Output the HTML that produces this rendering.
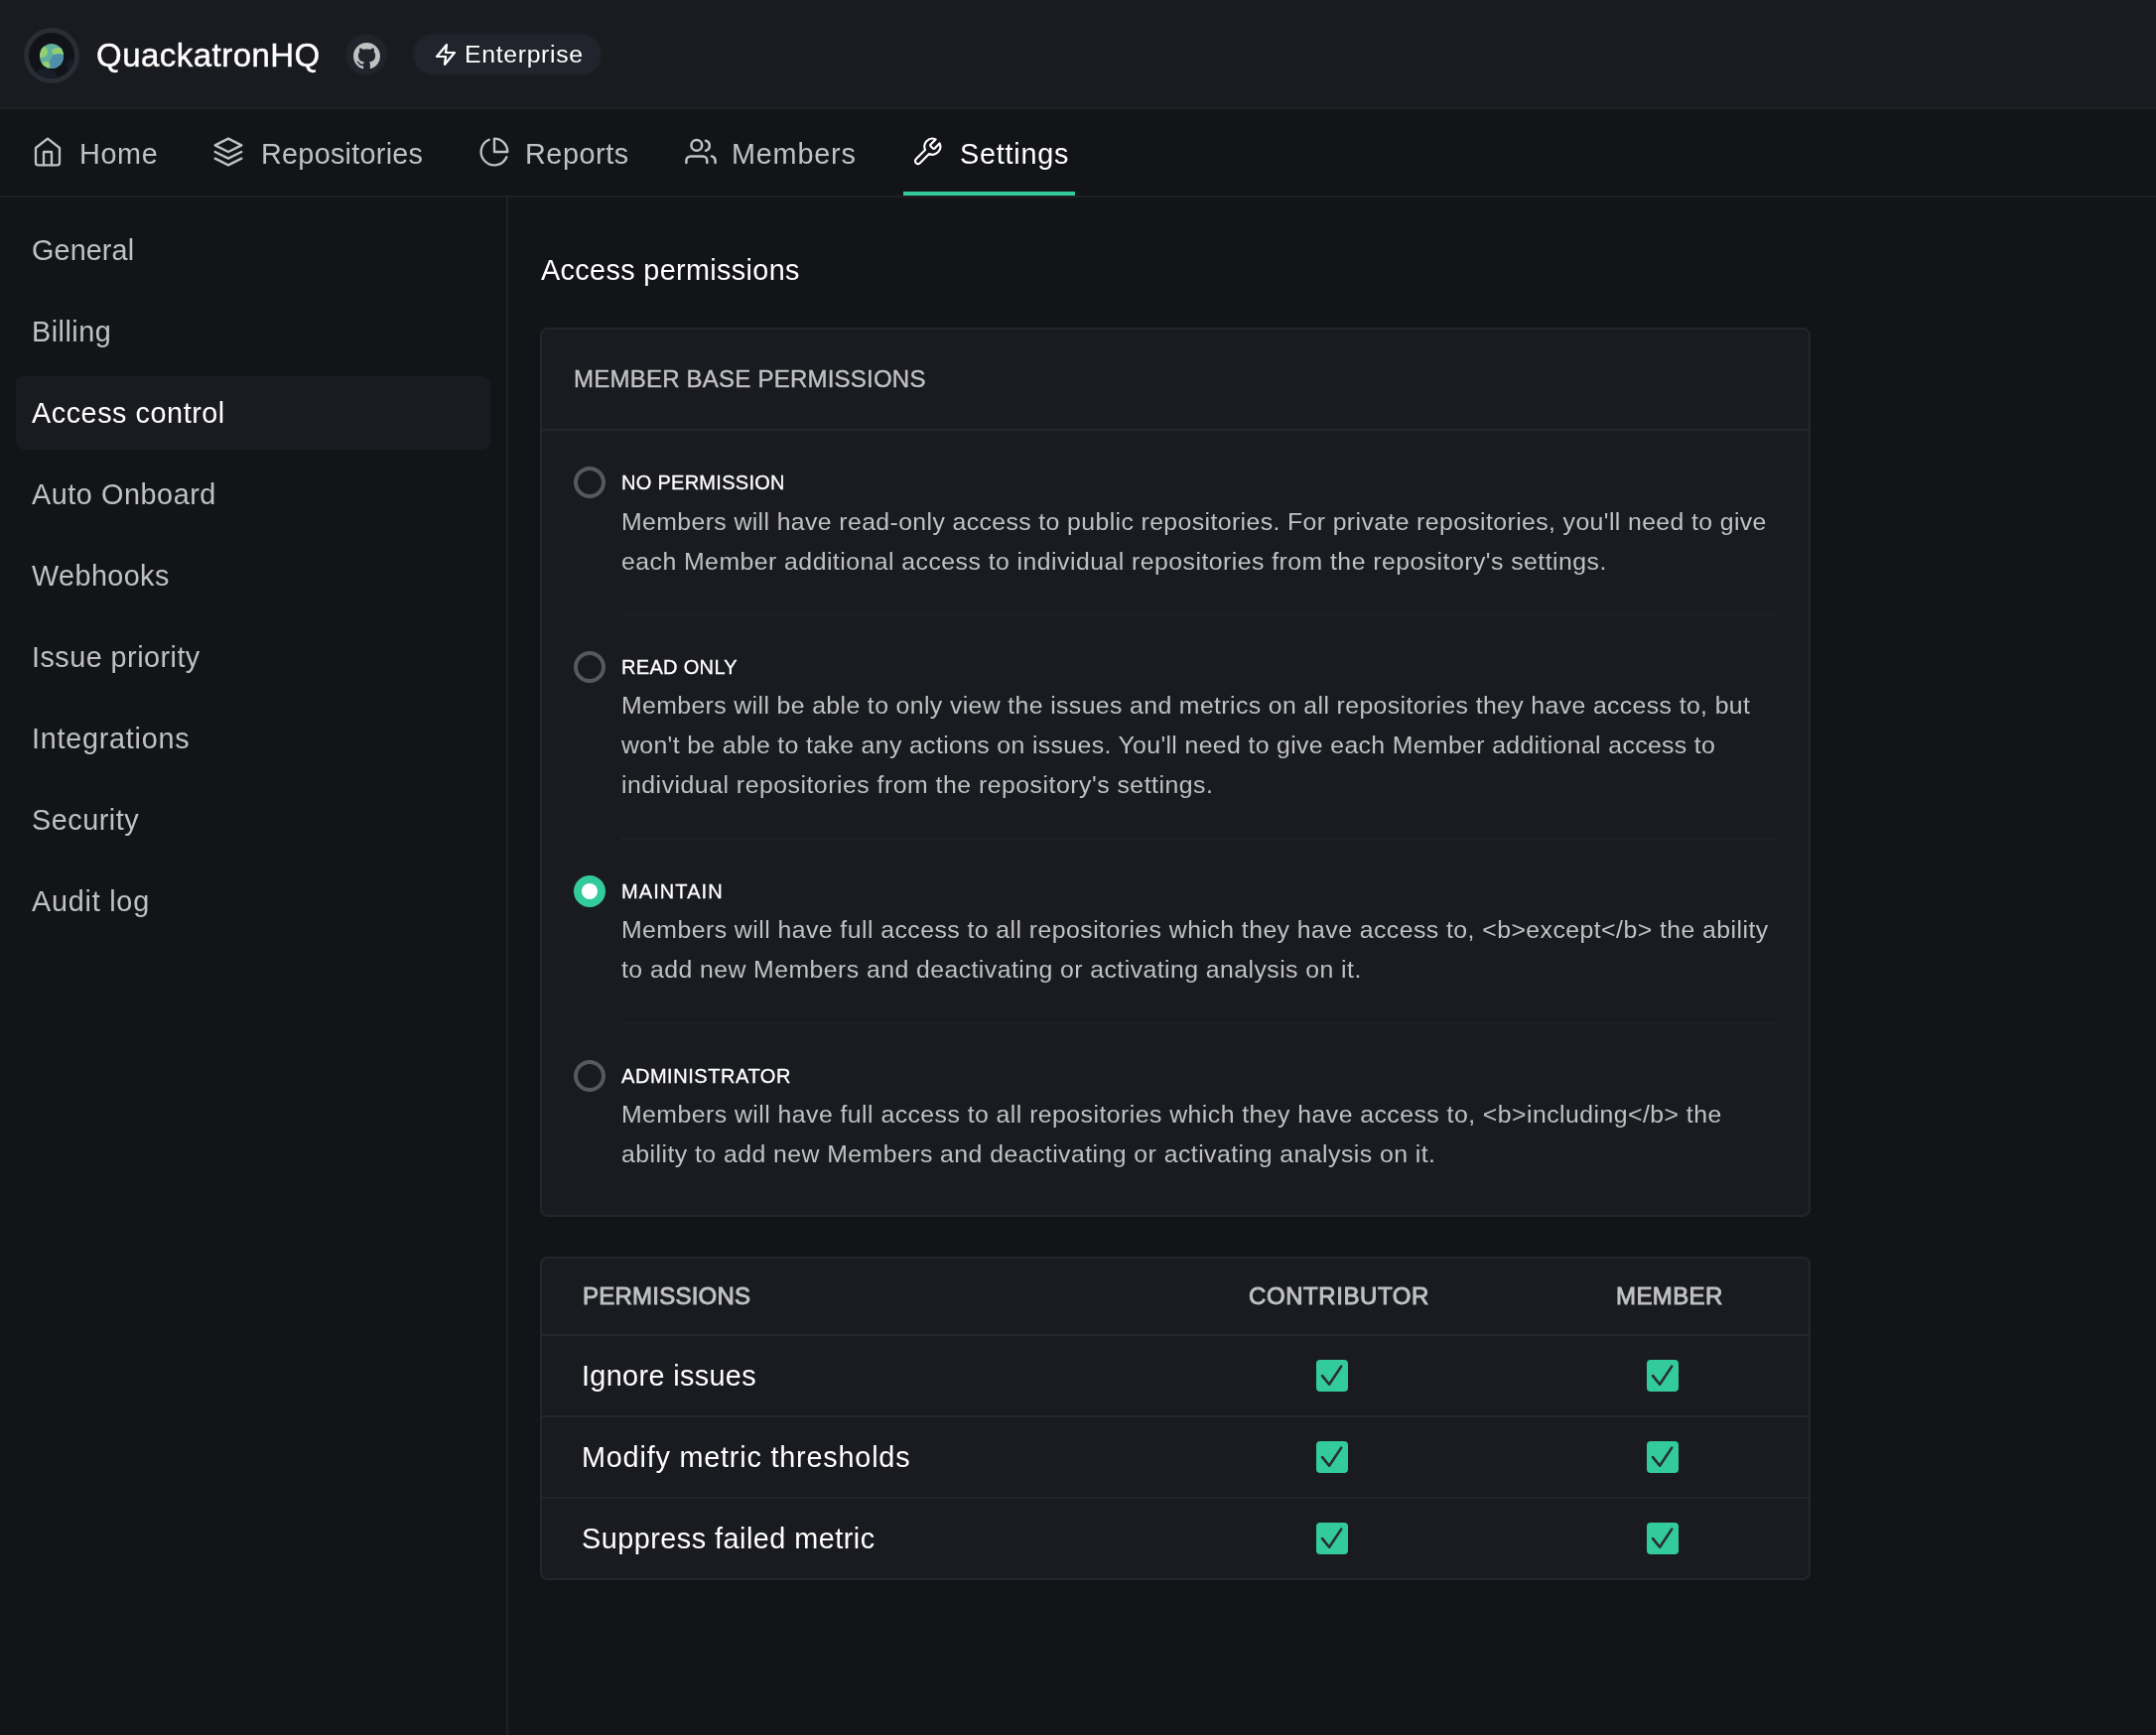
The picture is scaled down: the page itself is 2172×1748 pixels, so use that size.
<!DOCTYPE html>
<html>
<head>
<meta charset="utf-8">
<style>
html,body{margin:0;padding:0;background:#131418;overflow:hidden;}
body{width:1086px;height:874px;position:relative;font-family:"Liberation Sans",sans-serif;-webkit-font-smoothing:antialiased;}
@media (min-width:1600px){ body{zoom:2;} }
.a{position:absolute;white-space:nowrap;will-change:transform;}
#hdr{position:absolute;left:0;top:0;width:1086px;height:54px;background:#1a1b20;border-bottom:1px solid #1e2124;}
#nav{position:absolute;left:0;top:55px;width:1086px;height:43.5px;background:#131418;border-bottom:1px solid #1e2124;}
#side{position:absolute;left:0;top:99.5px;width:255px;height:780px;border-right:1px solid #1e2124;}
.ic{position:absolute;fill:none;stroke-linecap:round;stroke-linejoin:round;}
.nt{font-size:14.4px;color:#c0c1c3;line-height:20px;}
.si{font-size:14.4px;color:#c0c1c3;line-height:20px;left:16px;}
.card{position:absolute;left:272px;width:638px;background:#1a1b20;border:1px solid #23262e;border-radius:4px;}
.rad{position:absolute;left:289px;width:12px;height:12px;border:2px solid #555a5f;border-radius:50%;}
.ot{font-size:10px;color:#fff;-webkit-text-stroke:0.15px #fff;letter-spacing:.6px;line-height:16px;left:313px;}
.od{font-size:12.4px;color:#c0c1c3;line-height:20px;left:313px;}
.sep{position:absolute;left:313px;width:582px;height:1px;background:#1e2124;}
.th{font-size:12px;color:#c0c1c3;-webkit-text-stroke:0.45px #c0c1c3;letter-spacing:.5px;line-height:16px;}
.rl{font-size:14.4px;color:#fff;line-height:20px;left:293px;}
.rdiv{position:absolute;left:273px;width:638px;height:1px;background:#23262e;}
.cb{position:absolute;width:16px;height:16px;background:#33cb9a;border-radius:2px;}
.cb svg{position:absolute;left:0;top:0;}
</style>
</head>
<body>
<div id="hdr"></div>
<!-- avatar -->
<div class="a" style="left:12px;top:13.9px;width:23px;height:23px;border:2.5px solid #2a2d36;border-radius:50%;background:#111318;overflow:hidden;">
  <div style="position:absolute;left:3px;top:18px;width:11px;height:7px;border-radius:50%;background:#181d2a;"></div><div style="position:absolute;left:19px;top:13px;width:5px;height:7px;border-radius:50%;background:#171b27;"></div><div style="position:absolute;left:5.25px;top:5.4px;width:12.4px;height:12.4px;border-radius:50%;background:#5fae9e;overflow:hidden;">
    <div style="position:absolute;left:-2px;top:1px;width:6px;height:6px;border-radius:50%;background:#93cf72;"></div>
    <div style="position:absolute;left:6px;top:2px;width:7px;height:4px;border-radius:50%;background:#93cf72;"></div>
    <div style="position:absolute;left:5px;top:5px;width:9px;height:9px;border-radius:50%;background:#4f8ea8;"></div>
    <div style="position:absolute;left:1px;top:9px;width:4px;height:4px;border-radius:50%;background:#93cf72;"></div>
  </div>
</div>
<div class="a" id="t_org" style="left:48.40px;top:17.90px;font-size:16.5px;line-height:20px;color:#fff;letter-spacing:0.236px;-webkit-text-stroke:0.2px #fff;">QuackatronHQ</div>
<!-- github -->
<div class="a" style="left:173.4px;top:16.7px;width:20px;height:20px;border:1px solid #1c1f23;border-radius:50%;background:#21242c;"></div>
<svg class="a" style="left:177.75px;top:21.45px" width="13.5" height="13.5" viewBox="0 0 16 16"><path fill="#c0c1c3" d="M8 0C3.58 0 0 3.58 0 8c0 3.54 2.290 6.530 5.470 7.590.4.07.55-.17.55-.38 0-.19-.01-.82-.01-1.49-2.01.37-2.53-.49-2.69-.94-.09-.23-.48-.94-.82-1.13-.28-.15-.68-.52-.01-.53.63-.01 1.08.58 1.23.82.72 1.21 1.87.87 2.33.66.07-.52.28-.87.51-1.07-1.78-.2-3.64-.89-3.64-3.950 0-.87.31-1.59.82-2.15-.08-.2-.36-1.020.08-2.12 0 0 .67-.21 2.2.82.64-.18 1.32-.27 2-.27.68 0 1.36.09 2 .27 1.53-1.04 2.2-.82 2.2-.82.44 1.1.16 1.92.08 2.12.51.56.82 1.27.82 2.15 0 3.07-1.87 3.75-3.65 3.95.29.25.54.73.54 1.48 0 1.07-.01 1.93-.01 2.2 0 .21.15.46.55.38A8.013 8.013 0 0016 8c0-4.42-3.58-8-8-8z"/></svg>
<!-- enterprise -->
<div class="a" style="left:207.5px;top:16.6px;width:94px;height:19.8px;border:1px solid #1c1f23;border-radius:11px;background:#21242c;"></div>
<svg class="a ic" style="left:218.5px;top:21.5px" width="12" height="12" viewBox="0 0 24 24" stroke="#fff" stroke-width="2.2"><polygon points="13 2 3 14 12 14 11 22 21 10 12 10 13 2"/></svg>
<div class="a" id="t_ent" style="left:233.85px;top:19.45px;font-size:12.4px;line-height:16px;color:#fff;letter-spacing:0.337px;">Enterprise</div>

<div id="nav"></div>
<!-- nav icons -->
<svg class="ic" style="left:16px;top:68.6px" width="16" height="16" viewBox="0 0 24 24" stroke="#c0c1c3" stroke-width="1.75"><path d="m3 9 9-7 9 7v11a2 2 0 0 1-2 2H5a2 2 0 0 1-2-2z"/><polyline points="9 22 9 12 15 12 15 22"/></svg>
<div class="a nt" id="t_home" style="left:40.00px;top:67.55px;letter-spacing:0.316px;">Home</div>
<svg class="ic" style="left:107px;top:68.3px" width="16" height="16" viewBox="0 0 24 24" stroke="#c0c1c3" stroke-width="1.75"><polygon points="12 2 2 7 12 12 22 7 12 2"/><polyline points="2 17 12 22 22 17"/><polyline points="2 12 12 17 22 12"/></svg>
<div class="a nt" id="t_repo" style="left:131.25px;top:67.30px;letter-spacing:0.134px;">Repositories</div>
<svg class="ic" style="left:240.8px;top:68.4px" width="16" height="16" viewBox="0 0 24 24" stroke="#c0c1c3" stroke-width="1.75"><path d="M21.21 15.89A10 10 0 1 1 8 2.83"/><path d="M22 12A10 10 0 0 0 12 2v10z"/></svg>
<div class="a nt" id="t_rep" style="left:264.70px;top:67.30px;letter-spacing:0.271px;">Reports</div>
<svg class="ic" style="left:344px;top:68px" width="20" height="18" viewBox="0 0 20 18" stroke="#c0c1c3" stroke-width="1.25"><path d="M1.7 14.0V12.9A2.2 2.2 0 0 1 3.9 10.7H9.95A2.2 2.2 0 0 1 12.15 12.9V14.0"/><circle cx="6.9" cy="5.2" r="2.675"/><path d="M11.5 2.9A2.6 2.6 0 0 1 11.5 7.9"/><path d="M14.45 10.7A2.4 2.4 0 0 1 16.3 13.0V14.0"/></svg>
<div class="a nt" id="t_mem" style="left:368.60px;top:67.30px;letter-spacing:0.402px;">Members</div>
<svg class="ic" style="left:458.8px;top:68.6px" width="16" height="16" viewBox="0 0 24 24" stroke="#fff" stroke-width="1.6"><path d="M14.7 6.3a1 1 0 0 0 0 1.4l1.6 1.6a1 1 0 0 0 1.4 0l3.77-3.77a6 6 0 0 1-7.94 7.94l-6.91 6.91a2.12 2.12 0 0 1-3-3l6.91-6.91a6 6 0 0 1 7.94-7.94l-3.760 3.76z"/></svg>
<div class="a nt" id="t_set" style="left:483.40px;top:67.30px;color:#fff;letter-spacing:0.378px;">Settings</div>
<div class="a" style="left:455px;top:96.5px;width:86.6px;height:2px;background:#33cb9a;"></div>

<div id="side"></div>
<div class="a" style="left:8px;top:189.4px;width:239px;height:37px;border-radius:4px;background:#1a1b20;"></div>
<div class="a si" id="s0" style="top:115.90px;letter-spacing:0.053px;">General</div>
<div class="a si" id="s1" style="top:156.90px;letter-spacing:0.236px;">Billing</div>
<div class="a si" id="s2" style="top:197.90px;color:#fff;letter-spacing:0.269px;">Access control</div>
<div class="a si" id="s3" style="top:238.90px;letter-spacing:0.275px;">Auto Onboard</div>
<div class="a si" id="s4" style="top:279.90px;letter-spacing:0.198px;">Webhooks</div>
<div class="a si" id="s5" style="top:320.90px;letter-spacing:0.231px;">Issue priority</div>
<div class="a si" id="s6" style="top:361.90px;letter-spacing:0.372px;">Integrations</div>
<div class="a si" id="s7" style="top:402.90px;letter-spacing:0.255px;">Security</div>
<div class="a si" id="s8" style="top:443.90px;letter-spacing:0.380px;">Audit log</div>

<div class="a" id="t_title" style="left:272.65px;top:126.00px;font-size:14.4px;line-height:20px;color:#fff;letter-spacing:0.176px;">Access permissions</div>

<!-- card 1 -->
<div class="card" style="top:165px;height:446px;"></div>
<div class="a" id="t_mbp" style="left:289.07px;top:183.08px;font-size:12px;line-height:16px;color:#c0c1c3;letter-spacing:0.114px;-webkit-text-stroke:0.2px #c0c1c3;">MEMBER BASE PERMISSIONS</div>
<div class="rdiv" style="top:216px;"></div>

<div class="rad" style="top:235px;"></div>
<div class="a ot" id="o1" style="top:234.80px;letter-spacing:0.141px;">NO PERMISSION</div>
<div class="a od" id="d1a" style="top:252.75px;letter-spacing:0.197px;">Members will have read-only access to public repositories. For private repositories, you'll need to give</div>
<div class="a od" id="d1b" style="top:273.00px;letter-spacing:0.234px;">each Member additional access to individual repositories from the repository's settings.</div>
<div class="sep" style="top:309px;"></div>

<div class="rad" style="top:328px;"></div>
<div class="a ot" id="o2" style="top:327.80px;letter-spacing:0.162px;">READ ONLY</div>
<div class="a od" id="d2a" style="top:345.5px;letter-spacing:0.192px;">Members will be able to only view the issues and metrics on all repositories they have access to, but</div>
<div class="a od" id="d2b" style="top:365.5px;letter-spacing:0.183px;">won't be able to take any actions on issues. You'll need to give each Member additional access to</div>
<div class="a od" id="d2c" style="top:385.5px;letter-spacing:0.254px;">individual repositories from the repository's settings.</div>
<div class="sep" style="top:422px;"></div>

<div class="rad" style="top:441px;border-color:#33cb9a;background:#33cb9a;"></div>
<div class="a" style="left:293px;top:445px;width:8px;height:8px;border-radius:50%;background:#fff;"></div>
<div class="a ot" id="o3" style="top:440.80px;letter-spacing:0.545px;">MAINTAIN</div>
<div class="a od" id="d3a" style="top:458.5px;letter-spacing:0.226px;">Members will have full access to all repositories which they have access to, &lt;b&gt;except&lt;/b&gt; the ability</div>
<div class="a od" id="d3b" style="top:478.5px;letter-spacing:0.223px;">to add new Members and deactivating or activating analysis on it.</div>
<div class="sep" style="top:515px;"></div>

<div class="rad" style="top:534px;"></div>
<div class="a ot" id="o4" style="top:533.80px;letter-spacing:0.277px;">ADMINISTRATOR</div>
<div class="a od" id="d4a" style="top:551.5px;letter-spacing:0.230px;">Members will have full access to all repositories which they have access to, &lt;b&gt;including&lt;/b&gt; the</div>
<div class="a od" id="d4b" style="top:571.5px;letter-spacing:0.229px;">ability to add new Members and deactivating or activating analysis on it.</div>

<!-- card 2 -->
<div class="card" style="top:633px;height:161px;"></div>
<div class="a th" id="h1" style="left:293.35px;top:645.00px;letter-spacing:0.115px;">PERMISSIONS</div>
<div class="a th" id="h2" style="left:629.10px;top:645px;letter-spacing:0.290px;">CONTRIBUTOR</div>
<div class="a th" id="h3" style="left:814.20px;top:645px;letter-spacing:0.200px;">MEMBER</div>
<div class="rdiv" style="top:672px;"></div>
<div class="a rl" id="r1" style="top:683.00px;letter-spacing:0.178px;">Ignore issues</div>
<div class="rdiv" style="top:713px;"></div>
<div class="a rl" id="r2" style="top:724.00px;letter-spacing:0.402px;">Modify metric thresholds</div>
<div class="rdiv" style="top:754px;"></div>
<div class="a rl" id="r3" style="top:765.00px;letter-spacing:0.243px;">Suppress failed metric</div>

<div class="cb" style="left:663px;top:685px;"><svg width="16" height="16" viewBox="0 0 16 16"><path d="M3.05 8.05 L6.55 12.35 L12.6 3.3" fill="none" stroke="#2a2d35" stroke-width="1.3" stroke-linecap="round" stroke-linejoin="round"/></svg></div>
<div class="cb" style="left:829.6px;top:685px;"><svg width="16" height="16" viewBox="0 0 16 16"><path d="M3.05 8.05 L6.55 12.35 L12.6 3.3" fill="none" stroke="#2a2d35" stroke-width="1.3" stroke-linecap="round" stroke-linejoin="round"/></svg></div>
<div class="cb" style="left:663px;top:725.9px;"><svg width="16" height="16" viewBox="0 0 16 16"><path d="M3.05 8.05 L6.55 12.35 L12.6 3.3" fill="none" stroke="#2a2d35" stroke-width="1.3" stroke-linecap="round" stroke-linejoin="round"/></svg></div>
<div class="cb" style="left:829.6px;top:725.9px;"><svg width="16" height="16" viewBox="0 0 16 16"><path d="M3.05 8.05 L6.55 12.35 L12.6 3.3" fill="none" stroke="#2a2d35" stroke-width="1.3" stroke-linecap="round" stroke-linejoin="round"/></svg></div>
<div class="cb" style="left:663px;top:766.8px;"><svg width="16" height="16" viewBox="0 0 16 16"><path d="M3.05 8.05 L6.55 12.35 L12.6 3.3" fill="none" stroke="#2a2d35" stroke-width="1.3" stroke-linecap="round" stroke-linejoin="round"/></svg></div>
<div class="cb" style="left:829.6px;top:766.8px;"><svg width="16" height="16" viewBox="0 0 16 16"><path d="M3.05 8.05 L6.55 12.35 L12.6 3.3" fill="none" stroke="#2a2d35" stroke-width="1.3" stroke-linecap="round" stroke-linejoin="round"/></svg></div>
</body>
</html>
